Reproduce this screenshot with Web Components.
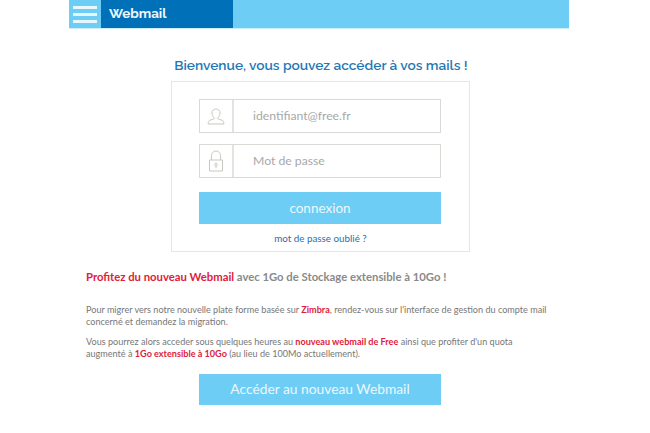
<!DOCTYPE html>
<html lang="fr"><head><meta charset="utf-8"><title>Webmail</title>
<style>html,body{margin:0;background:#fff;overflow:hidden}body{height:433px;font-family:Lato,sans-serif}</style>
</head><body>
<webmail-page></webmail-page>
<template id="t-header"><style>
:host{display:flex;width:500px;height:28px;background:#6dcdf4;border-bottom:1px solid #cdeefb}
.m{width:32px;display:flex;flex-direction:column;justify-content:center;gap:4px;align-items:center}
.m i{display:block;width:24px;height:3px;background:#e6f7fe}
.t{width:132px;background:#0070b8;color:#eef8fd;font:700 13.4px Raleway,Lato,sans-serif;line-height:27px;padding-left:8px;box-sizing:border-box}
</style><div class="m"><i></i><i></i><i></i></div><div class="t">Webmail</div></template>
<template id="t-field"><style>
:host{display:flex;height:34px;box-sizing:border-box;border:1px solid #d9d9d5;background:#fff}
.i{width:34px;border-right:2px solid #e3e3df;display:flex;align-items:center;justify-content:center;flex:none;box-sizing:border-box}
.v{padding-left:19px;font:400 12.2px/31px Lato,sans-serif;color:#a8a8a8}
</style><div class="i"><slot name="icon"></slot></div><div class="v"><slot></slot></div></template>
<template id="t-btn"><style>
:host{display:block;width:242px;background:#6dcdf4;color:#eaf8fe;text-align:center;font-family:Lato,sans-serif}
</style><slot></slot></template>
<template id="t-page"><style>
:host{display:block;width:500px;margin-left:69px}
h1{margin:20px 0 0;height:32px;text-align:center;font:600 13.7px/32px Raleway,Lato,sans-serif;color:#1f78b4;padding-left:4px;box-sizing:border-box}
.card{margin-left:102px;width:299px;height:171px;box-sizing:border-box;border:1px solid #cdeefb;padding:17px 28px 0 27px;display:flex;flex-direction:column}
wm-field+wm-field{margin-top:11px}
.login{height:32px;line-height:33px;font-size:13.5px;margin-top:14px}
.lost{text-align:center;font-size:9.8px;line-height:12px;color:#2a6fae;margin-top:8px;padding-left:1px}
.txt{padding-left:17px;color:#777}
h2{margin:17px 0 0;font:700 11.3px/15px Lato,sans-serif;color:#8a8a8a;white-space:nowrap}
b{color:#e0203a;font-weight:700}
p{margin:0;font-size:9.1px;line-height:12px}
p span{display:block;white-space:nowrap}
h2+p{margin-top:20px}p+p{margin-top:8px}
.go{margin:14px 0 0 130px;height:31px;line-height:30px;font-size:13.8px}
svg{display:block;fill:none;stroke:#c8c8c3;stroke-width:1}
</style>
<wm-header></wm-header>
<h1>Bienvenue, vous pouvez accéder à vos mails !</h1>
<div class="card">
<wm-field><svg slot="icon" width="18" height="18" viewBox="0 0 18 18"><path d="M9 2C6.700 2 5 3.700 5 6c0 2 .9 3.500 2.200 4.500v1.200L2.500 13.500c-1 .5-1.300 1.300-1.300 3.500h15.600c0-2.200-.3-3-1.300-3.500l-4.700-1.800v-1.200C12.100 9.500 13 8 13 6c0-2.300-1.700-4-4-4z"/></svg>identifiant@free.fr</wm-field>
<wm-field><svg slot="icon" width="16" height="22" viewBox="0 0 16 22"><path d="M3.500 10V5.500C3.500 3 5.400 1 8 1s4.500 2 4.500 4.500V10M1.500 10h13v11h-13z"/><circle cx="8" cy="14.500" r="1.300"/><path d="M8 16v2"/></svg>Mot de passe</wm-field>
<wm-btn class="login">connexion</wm-btn>
<div class="lost">mot de passe oublié ?</div>
</div>
<div class="txt">
<h2><b>Profitez du nouveau Webmail</b> avec 1Go de Stockage extensible à 10Go !</h2>
<p><span>Pour migrer vers notre nouvelle plate forme basée sur <b>Zimbra</b>, rendez-vous sur l'interface de gestion du compte mail</span><span>concerné et demandez la migration.</span></p>
<p><span>Vous pourrez alors acceder sous quelques heures au <b>nouveau webmail de Free</b> ainsi que profiter d'un quota</span><span>augmenté à <b>1Go extensible à 10Go</b> (au lieu de 100Mo actuellement).</span></p>
</div>
<wm-btn class="go">Accéder au nouveau Webmail</wm-btn>
</template>
<script>
function def(n,t){customElements.define(n,class extends HTMLElement{constructor(){super();this.attachShadow({mode:"open"}).appendChild(document.getElementById(t).content.cloneNode(true))}})}
def("wm-header","t-header");def("wm-field","t-field");def("wm-btn","t-btn");def("webmail-page","t-page");
</script>
</body></html>
